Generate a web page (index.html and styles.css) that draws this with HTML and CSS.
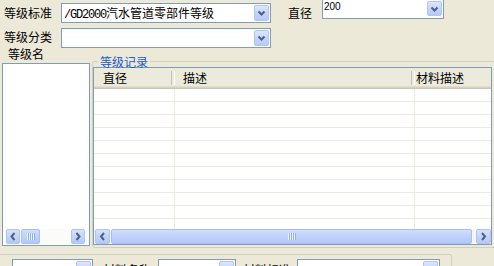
FILE: index.html
```html
<!DOCTYPE html>
<html lang="zh-CN">
<head>
<meta charset="utf-8">
<title>等级</title>
<link rel="stylesheet" href="styles.css">
</head>
<body>
<div class="app">
  <div class="row row1">
    <span class="lbl lbl-std">等级标准</span>
    <div class="combo c1">
      <span class="val"><span class="ascii">/GD2000</span>汽水管道零部件等级</span>
      <span class="btn"><svg width="13" height="14" viewBox="0 0 13 14"><path d="M3.5 5.5 L6.5 8.5 L9.5 5.5" fill="none" stroke="#4D6185" stroke-width="2"/></svg></span>
    </div>
    <span class="lbl lbl-dia">直径</span>
    <div class="combo c2">
      <span class="val num">200</span>
      <span class="btn"><svg width="13" height="14" viewBox="0 0 13 14"><path d="M3.5 5.5 L6.5 8.5 L9.5 5.5" fill="none" stroke="#4D6185" stroke-width="2"/></svg></span>
    </div>
  </div>
  <div class="row row2">
    <span class="lbl lbl-std">等级分类</span>
    <div class="combo c1 c3">
      <span class="val"></span>
      <span class="btn"><svg width="13" height="14" viewBox="0 0 13 14"><path d="M3.5 5.5 L6.5 8.5 L9.5 5.5" fill="none" stroke="#4D6185" stroke-width="2"/></svg></span>
    </div>
  </div>
  <div class="main">
    <div class="leftcol">
      <div class="lbl lbl-name">等级名</div>
      <div class="listbox">
        <div class="lb-body"></div>
        <div class="hscroll hs-small">
          <span class="sbtn"><svg width="12" height="13" viewBox="0 0 12 13"><path d="M7.5 3 L4.5 6.5 L7.5 10" fill="none" stroke="#4D6185" stroke-width="2"/></svg></span>
          <span class="thumb thumb-small"><span class="grip"></span></span>
          <span class="track"></span>
          <span class="sbtn"><svg width="12" height="13" viewBox="0 0 12 13"><path d="M4.5 3 L7.5 6.5 L4.5 10" fill="none" stroke="#4D6185" stroke-width="2"/></svg></span>
        </div>
      </div>
    </div>
    <fieldset class="group">
      <legend>等级记录</legend>
      <div class="table">
        <div class="thead">
          <div class="th col1">直径</div>
          <div class="th col2">描述</div>
          <div class="th col3">材料描述</div>
        </div>
        <div class="tbody">
          <div class="tr"><span class="td col1"></span><span class="td col2"></span><span class="td col3"></span></div>
          <div class="tr"><span class="td col1"></span><span class="td col2"></span><span class="td col3"></span></div>
          <div class="tr"><span class="td col1"></span><span class="td col2"></span><span class="td col3"></span></div>
          <div class="tr"><span class="td col1"></span><span class="td col2"></span><span class="td col3"></span></div>
          <div class="tr"><span class="td col1"></span><span class="td col2"></span><span class="td col3"></span></div>
          <div class="tr"><span class="td col1"></span><span class="td col2"></span><span class="td col3"></span></div>
          <div class="tr"><span class="td col1"></span><span class="td col2"></span><span class="td col3"></span></div>
          <div class="tr"><span class="td col1"></span><span class="td col2"></span><span class="td col3"></span></div>
          <div class="tr"><span class="td col1"></span><span class="td col2"></span><span class="td col3"></span></div>
          <div class="tr"><span class="td col1"></span><span class="td col2"></span><span class="td col3"></span></div>
          <div class="tr"><span class="td col1"></span><span class="td col2"></span><span class="td col3"></span></div>
        </div>
        <div class="hscroll hs-table">
          <span class="sbtn sbtn-w"><svg width="13" height="13" viewBox="0 0 13 13"><path d="M8 3 L5 6.5 L8 10" fill="none" stroke="#4D6185" stroke-width="2"/></svg></span>
          <span class="thumb thumb-table"><span class="grip"></span></span>
          <span class="track"></span>
          <span class="sbtn sbtn-w"><svg width="13" height="13" viewBox="0 0 13 13"><path d="M5 3 L8 6.5 L5 10" fill="none" stroke="#4D6185" stroke-width="2"/></svg></span>
        </div>
      </div>
    </fieldset>
  </div>
  <div class="bottom">
    <div class="combo ca"><span class="val"></span><span class="btn"></span></div>
    <span class="lbl lbl-b1">材料名称</span>
    <div class="combo cb"><span class="val"></span><span class="btn"></span></div>
    <span class="lbl lbl-b2">材料标准</span>
    <div class="combo cc"><span class="val"></span><span class="btn"></span></div>
  </div>
</div>
</body>
</html>
```

FILE: styles.css
```css
* { box-sizing: border-box; }
html, body { margin: 0; padding: 0; }
body {
  width: 494px;
  height: 266px;
  overflow: hidden;
  background: #ECE9D8;
  font-family: "Noto Sans CJK SC", "Liberation Sans", sans-serif;
  font-size: 12px;
  color: #000;
}
.app { width: 494px; }

.row { display: flex; align-items: flex-start; height: 24px; padding-left: 4px; }
.lbl { line-height: 14px; white-space: nowrap; }
.lbl-std { width: 57px; margin-top: 6px; }
.lbl-dia { width: 24px; margin-left: 17px; margin-top: 6px; }

.combo {
  display: flex;
  height: 20px;
  border: 1px solid #7F9DB9;
  background: #fff;
  flex-shrink: 0;
}
.combo .val {
  flex: 1;
  padding-left: 2px;
  line-height: 18px;
  white-space: nowrap;
  overflow: hidden;
}
.ascii {
  font-family: "Liberation Mono", monospace;
  font-size: 12px;
  letter-spacing: -1.2px;
}
.combo .btn {
  width: 15px;
  height: 16px;
  margin: 1px;
  border: 1px solid #B3C4EE;
  border-radius: 2px;
  background: linear-gradient(#DCE6FD, #C5D5FB 50%, #B6C9F7);
  display: flex;
}
.c1 { width: 210px; margin-top: 3px; }
.c3 { margin-top: 4px; }
.c2 { width: 122px; margin-left: 10px; margin-top: -1px; }
.c2 .btn { height: 15px; }
.num {
  font-family: "Liberation Sans", sans-serif;
  font-size: 10px;
  line-height: 12px !important;
  padding-top: 1px;
  padding-left: 1px !important;
}

.main { display: flex; align-items: flex-start; height: 200px; }
.leftcol { width: 90px; padding-left: 2px; }
.lbl-name { margin-left: 6px; line-height: 12px; }
.listbox {
  margin-top: 3px;
  width: 88px;
  height: 183px;
  border: 1px solid #7F9DB9;
  background: #fff;
  display: flex;
  flex-direction: column;
}
.lb-body { flex: 1; }

.hscroll {
  display: flex;
  height: 15px;
  flex-shrink: 0;
  background: #F6F5F0;
}
.hs-small { margin-bottom: 1px; padding-left: 3px; padding-right: 4px; background: #FBFBF8; }
.hs-table { padding-left: 1px; }
.sbtn {
  width: 14px;
  height: 15px;
  border: 1px solid #B1C3F0;
  border-radius: 2px;
  background: linear-gradient(#D6E1FD, #C0D2FA 60%, #B5C8F6);
  display: flex;
  align-items: center;
  justify-content: center;
  flex-shrink: 0;
}
.sbtn-w { width: 15px; }
.thumb {
  height: 15px;
  border: 1px solid #A9BEF2;
  border-radius: 2px;
  background: linear-gradient(#CFDCFD, #BDD0FA 60%, #B3C7F6);
  display: flex;
  align-items: center;
  justify-content: center;
  flex-shrink: 0;
}
.thumb-small { width: 19px; margin-left: 1px; }
.thumb-table { width: 361px; margin-left: 1px; }
.track { flex: 1; }
.grip {
  width: 8px;
  height: 7px;
  background: repeating-linear-gradient(90deg, #EEF4FE 0 1px, #8FAEF0 1px 2px);
}

.group {
  margin: 8px 0 0 2px;
  padding: 0 3px 2px 0;
  border: 1px solid #D0D0BF;
  border-radius: 3px;
  min-width: 0;
  width: 404px;
  flex-shrink: 0;
}
.group legend {
  margin-left: 5px;
  padding: 0 2px;
  line-height: 11px;
  color: #1D5BC8;
}
.table {
  width: 399px;
  height: 178px;
  border: 1px solid #7F9DB9;
  background: #fff;
  display: flex;
  flex-direction: column;
}
.thead {
  display: flex;
  height: 21px;
  flex-shrink: 0;
  background: linear-gradient(#EBEADB 0, #EBEADB 18px, #E2DECD 18px, #E2DECD 19px, #D6D2C2 19px, #D6D2C2 20px, #CBC7B8 20px);
}
.th {
  position: relative;
  line-height: 16px;
  padding-top: 2px;
  white-space: nowrap;
}
.th.col1 { padding-left: 9px; }
.th.col2 { padding-left: 8px; }
.th.col3 { padding-left: 1px; }
.col1 { width: 81px; flex-shrink: 0; }
.col2 { width: 240px; flex-shrink: 0; }
.col3 { flex: 1; }
.th.col1::after, .th.col2::after {
  content: "";
  position: absolute;
  right: 0;
  top: 3px;
  width: 2px;
  height: 14px;
  border-left: 1px solid #C7C5B2;
  border-right: 1px solid #fff;
}
.tbody { flex: 1; overflow: hidden; }
.tr { display: flex; height: 13px; border-bottom: 1px solid #EDEBE0; }
.td.col1, .td.col2 { border-right: 1px solid #EDEBE0; }

.bottom {
  margin-top: 6px;
  margin-left: -5px;
  width: 457px;
  height: 30px;
  border: 1px solid #D0D0BF;
  border-bottom: none;
  border-radius: 3px 3px 0 0;
  padding-top: 4px;
  display: flex;
  align-items: flex-start;
}
.ca { width: 81px; margin-left: 16px; }
.cb { width: 78px; margin-left: 7px; }
.cc { width: 143px; margin-left: 6px; }
.bottom .lbl { line-height: 12px; margin-top: 5px; width: 48px; }
.lbl-b1 { margin-left: 10px; }
.lbl-b2 { margin-left: 7px; }
```
